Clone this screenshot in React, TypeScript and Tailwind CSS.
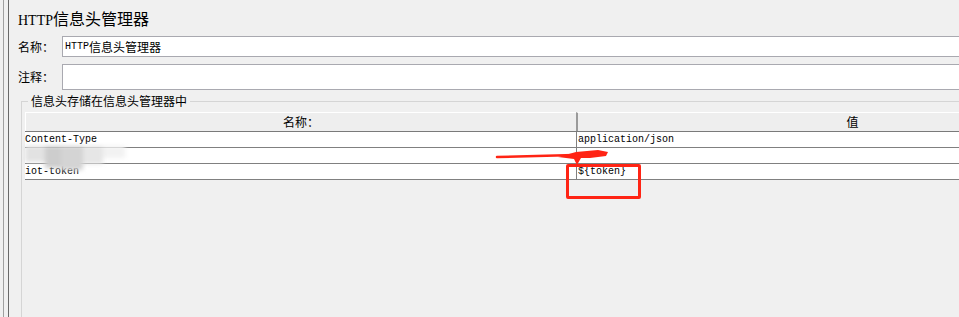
const CJK = "font-['Noto_Sans_CJK_SC',sans-serif]";
const MONO = "font-['Liberation_Mono','Noto_Sans_CJK_SC',monospace]";

const ROWS = [
  { name: 'Content-Type', value: 'application/json' },
  { name: '', value: '' },
  { name: 'iot-token', value: '${token}' },
];

function Field({ label, height, children }: { label: string; height: string; children?: React.ReactNode }) {
  return (
    <div className="flex items-center">
      <span className={`w-[53px] shrink-0 whitespace-nowrap pl-[9px] text-[12px] leading-[14px] text-black ${CJK}`}>{label}</span>
      <div className={`flex flex-1 items-center -mr-[2px] border border-[#a9a9b0] bg-white pl-[2px] ${height}`}>
        {children}
      </div>
    </div>
  );
}

export default function App() {
  return (
    <div className="relative flex h-[317px] w-[959px] overflow-hidden bg-[#f0f0f0]">
      {/* window frame on the left */}
      <div className="w-[3px]" />
      <div className="w-px bg-[#a0a0a0]" />
      <div className="w-[4px]" />
      <div className="w-px bg-[#696969]" />

      <div className="flex min-w-0 flex-1 flex-col">
        <h1 className={`pl-[9px] pt-[8px] text-[16px] leading-[20px] text-black ${CJK}`}>
          <span className="font-['Liberation_Serif'] text-[14px]">HTTP</span>信息头管理器
        </h1>

        <div className="mt-[5px]">
          <Field label="名称：" height="h-[21px]">
            <span className={`${MONO} text-[10px]`}>HTTP</span>
            <span className={`${CJK} text-[12px] leading-[14px]`}>信息头管理器</span>
          </Field>
        </div>
        <div className="mt-[7px]">
          <Field label="注释：" height="h-[26px]" />
        </div>

        {/* group box */}
        <fieldset className="mt-[4px] ml-[12px] flex-1 border-l border-t border-[#d5d5d5] pl-[3px]">
          <legend className={`ml-[3px] px-[3px] text-[12px] leading-[14px] text-black ${CJK}`}>
            信息头存储在信息头管理器中
          </legend>

          <div className="mt-[4px] w-[1102px]">
            {/* header */}
            <div className="grid h-[20px] grid-cols-[551px_551px] border-b-2 border-[#7a7a7a]">
              <div className={`flex items-center justify-center border-l border-t border-white bg-[#eeeeee] text-[12px] ${CJK}`}>
                名称：
              </div>
              <div className={`flex items-center justify-center border-l-2 border-t border-l-[#9a9a9a] border-t-white bg-[#eeeeee] text-[12px] ${CJK}`}>
                值
              </div>
            </div>
            {ROWS.map((r, i) => (
              <div key={i} className="grid h-[16px] grid-cols-[551px_551px] border-b border-[#808080] bg-white">
                <div className={`flex items-center text-[10px] leading-[12px] text-black ${MONO}`}>{r.name}</div>
                <div className={`flex items-center border-l border-[#808080] pl-px text-[10px] leading-[12px] text-black ${MONO}`}>
                  {r.value}
                </div>
              </div>
            ))}
          </div>
        </fieldset>
      </div>

      {/* redaction blur over the second row */}
      <div className="absolute left-[25px] top-[146px] flex h-[26px] w-[100px] blur-[2px]">
        <div className="h-[16px] w-[20px] bg-[#e2e2e2]" />
        <div className="h-[22px] w-[16px] bg-[#cdcdcd]" />
        <div className="h-[24px] w-[22px] bg-[#d4d4d4]" />
        <div className="h-[18px] w-[20px] bg-[#e6e6e6]" />
        <div className="h-[12px] w-[22px] bg-[#f2f2f2]" />
      </div>

      {/* red annotations */}
      <svg className="absolute left-0 top-0" width="959" height="317" viewBox="0 0 959 317">
        <path d="M497 157 L575 155" stroke="#ff2414" strokeWidth="2.5" strokeLinecap="round" fill="none" />
        <path d="M558 157 L576 152 L598 150 L608 152 L606 156 L590 158 L581 158 L577 165 L574 159 Z" fill="#ff2414" />
      </svg>
      <div className="absolute left-[566px] top-[164px] h-[35px] w-[75px] rounded-[2px] border-[3px] border-[#ff2414]" />
    </div>
  );
}
